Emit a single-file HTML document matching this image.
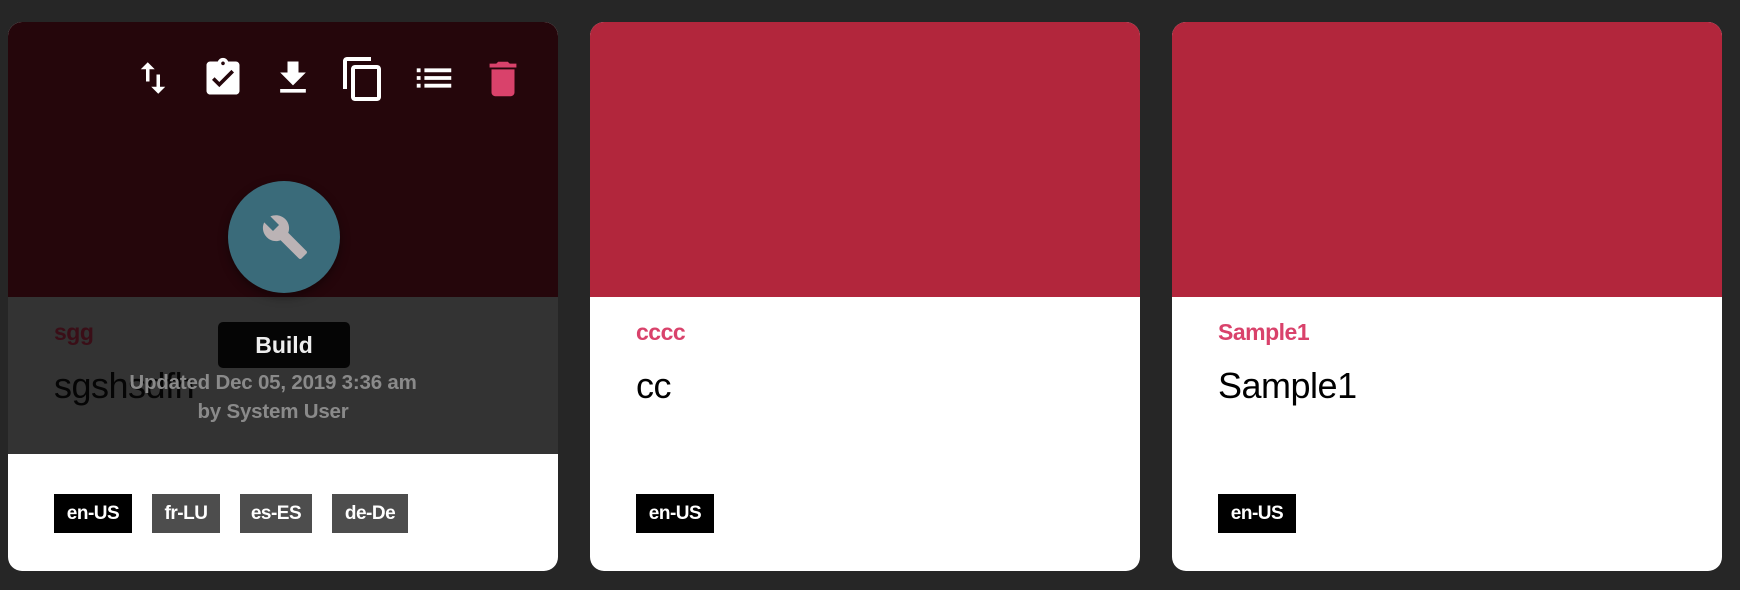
<!DOCTYPE html>
<html><head><style>
*{margin:0;padding:0;box-sizing:border-box}
body{width:1740px;height:590px;background:#262626;font-family:"Liberation Sans",sans-serif;position:relative;overflow:hidden}
.card{position:absolute;top:22px;width:550px;height:549px;background:#fff;border-radius:14px;overflow:hidden}
.top{position:absolute;left:0;top:0;width:100%;height:275px;background:#b2263c}
.title{position:absolute;left:46px;top:297px;font-size:23px;font-weight:bold;color:#d9426b;letter-spacing:-0.5px}
.name{position:absolute;left:46px;top:343px;font-size:36px;color:#000;letter-spacing:-0.5px}
.tag{position:absolute;top:472px;height:39px;line-height:39px;padding:0;text-align:center;font-size:19px;font-weight:bold;color:#fff;background:#000;letter-spacing:-0.5px}
.ico{position:absolute}
</style></head><body>
<div class="card" style="left:8px">
 <div class="top" style="background:#25060b"></div>
 <div style="position:absolute;left:0;top:275px;width:100%;height:157px;background:#333"></div>
 <div class="title" style="color:#3a0e17">sgg</div>
 <div class="name" style="color:#050505">sgshsdfh</div>
 <svg class="ico" style="left:124px;top:34px" width="42" height="44" viewBox="0 0 24 24"><path fill="#fff" d="M9 3L5 7h3v7h2V7h3L9 3zm7 14v-7h-2v7h-3l4 4 4-4h-3z"/></svg>
 <svg class="ico" style="left:193px;top:33px" width="44" height="46" viewBox="0 0 24 24"><path fill="#fff" d="M19 3h-4.18C14.4 1.84 13.3 1 12 1s-2.4.84-2.82 2H5c-1.1 0-2 .9-2 2v14c0 1.1.9 2 2 2h14c1.1 0 2-.9 2-2V5c0-1.1-.9-2-2-2zm-7 0c.55 0 1 .45 1 1s-.45 1-1 1-1-.45-1-1 .45-1 1-1zm-2 14l-4-4 1.41-1.41L10 14.17l6.59-6.59L18 9l-8 8z"/></svg>
 <svg class="ico" style="left:263px;top:33px" width="44" height="46" viewBox="0 0 24 24"><path fill="#fff" d="M19 9h-4V3H9v6H5l7 7 7-7zM5 18v2h14v-2H5z"/></svg>
 <svg class="ico" style="left:331px;top:32px" width="48" height="50" viewBox="0 0 24 24"><path fill="#fff" d="M16 1H4c-1.1 0-2 .9-2 2v14h2V3h12V1zm3 4H8c-1.1 0-2 .9-2 2v14c0 1.1.9 2 2 2h11c1.1 0 2-.9 2-2V7c0-1.1-.9-2-2-2zm0 16H8V7h11v14z"/></svg>
 <svg class="ico" style="left:403px;top:33px" width="46" height="46" viewBox="0 0 24 24"><path fill="#fff" d="M3 13h2v-2H3v2zm0 4h2v-2H3v2zm0-8h2V7H3v2zm4 4h14v-2H7v2zm0 4h14v-2H7v2zM7 7v2h14V7H7z"/></svg>
 <svg class="ico" style="left:472px;top:32px" width="46" height="50" viewBox="0 0 24 24"><path fill="#d9426b" d="M6 19c0 1.1.9 2 2 2h8c1.1 0 2-.9 2-2V7H6v12zM19 4h-3.5l-1-1h-5l-1 1H5v2h14V4z"/></svg>
 <div style="position:absolute;left:220px;top:159px;width:112px;height:112px;border-radius:50%;background:#3a6b7a;box-shadow:0 4px 10px rgba(0,0,0,.4)"></div>
 <svg style="position:absolute;left:253px;top:191px" width="48" height="48" viewBox="0 0 24 24"><path fill="#bbb3b5" d="M22.7 19l-9.1-9.1c.9-2.3.4-5-1.5-6.9-2-2-5-2.4-7.4-1.3L9 6 6 9 1.6 4.7C.4 7.1.9 10.1 2.9 12.1c1.9 1.9 4.6 2.4 6.9 1.5l9.1 9.1c.4.4 1 .4 1.4 0l2.3-2.3c.5-.4.5-1.1.1-1.4z"/></svg>
 <div style="position:absolute;left:210px;top:300px;width:132px;height:46px;border-radius:5px;background:#050505;color:#eee;font-weight:bold;font-size:23px;text-align:center;line-height:46px">Build</div>
 <div style="position:absolute;left:60px;top:346px;width:410px;text-align:center;color:#8a8a8a;font-weight:bold;font-size:20.5px;line-height:29px;letter-spacing:-0.2px">Updated Dec 05, 2019 3:36 am<br>by System User</div>
 <div class="tag" style="left:46px;width:78px">en-US</div>
 <div class="tag" style="left:144px;width:68px;background:#4d4d4d">fr-LU</div>
 <div class="tag" style="left:232px;width:72px;background:#4d4d4d">es-ES</div>
 <div class="tag" style="left:324px;width:76px;background:#4d4d4d">de-De</div>
</div>
<div class="card" style="left:590px">
 <div class="top"></div>
 <div class="title">cccc</div>
 <div class="name">cc</div>
 <div class="tag" style="left:46px;width:78px">en-US</div>
</div>
<div class="card" style="left:1172px">
 <div class="top"></div>
 <div class="title">Sample1</div>
 <div class="name">Sample1</div>
 <div class="tag" style="left:46px;width:78px">en-US</div>
</div>
</body></html>
